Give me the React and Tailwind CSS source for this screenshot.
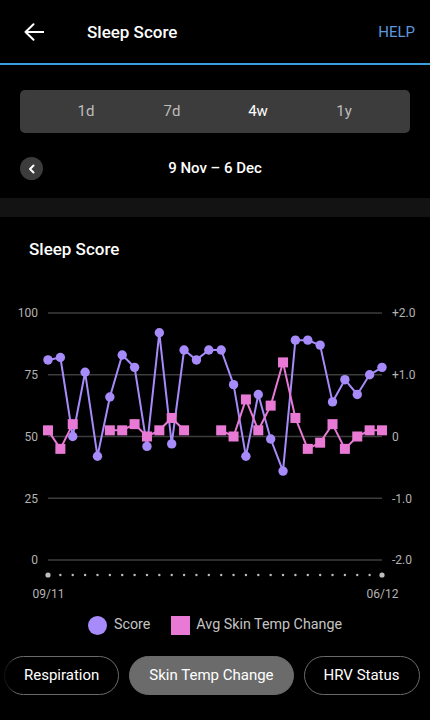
import React from "react";

const scores = [81, 82, 50, 76, 42, 66, 83, 78, 46, 92, 47, 85, 81, 85, 85, 71, 42, 67, 49, 36, 89, 89, 87, 64, 73, 67, 75, 78];
const temps = [52.5, 45, 55, null, null, 52.5, 52.5, 55, 50, 52.5, 57.5, 52.5, null, null, 52.5, 50, 65, 52.5, 62.5, 80, 57.5, 45, 47.5, 55, 45, 50, 52.5, 52.5];

const X0 = 48;
const X1 = 382;
const xAt = (i) => X0 + (i * (X1 - X0)) / 27;
const yAt = (v) => 560 - v * 2.47;

const PURPLE = "#a78bfa";
const PINK = "#e87ad6";

function Chart() {
  const grid = [
    { v: 100, l: "100", r: "+2.0" },
    { v: 75, l: "75", r: "+1.0" },
    { v: 50, l: "50", r: "0" },
    { v: 25, l: "25", r: "-1.0" },
    { v: 0, l: "0", r: "-2.0" },
  ];
  const scorePts = scores.map((v, i) => `${xAt(i).toFixed(1)},${yAt(v).toFixed(1)}`).join(" ");
  const segs = [];
  let cur = [];
  temps.forEach((v, i) => {
    if (v == null) {
      if (cur.length) segs.push(cur);
      cur = [];
    } else cur.push(`${xAt(i).toFixed(1)},${yAt(v).toFixed(1)}`);
  });
  if (cur.length) segs.push(cur);

  return (
    <svg width="430" height="320" viewBox="0 290 430 320" className="block" style={{ fontFamily: "Roboto, 'Liberation Sans', sans-serif" }}>
      {grid.map((g) => (
        <g key={g.v}>
          <line x1={X0} x2={X1} y1={yAt(g.v)} y2={yAt(g.v)} stroke="#3d3d3d" strokeWidth="1.4" />
          <text x="38" y={yAt(g.v)} dy="4.3" textAnchor="end" fontSize="12" fill="#b3b3b3">{g.l}</text>
          <text x="392" y={yAt(g.v)} dy="4.3" textAnchor="start" fontSize="12" fill="#b3b3b3">{g.r}</text>
        </g>
      ))}
      {scores.map((_, i) => (
        <circle key={i} cx={xAt(i)} cy="575" r={i === 0 || i === 27 ? 2.6 : 1.2} fill="#bdbdbd" />
      ))}
      <text x="48.5" y="598" textAnchor="middle" fontSize="12" fill="#b3b3b3">09/11</text>
      <text x="382.5" y="598" textAnchor="middle" fontSize="12" fill="#b3b3b3">06/12</text>

      <polyline points={scorePts} fill="none" stroke={PURPLE} strokeWidth="2" strokeLinejoin="round" />
      {scores.map((v, i) => (
        <circle key={i} cx={xAt(i)} cy={yAt(v)} r="4.7" fill={PURPLE} />
      ))}
      {segs.map((s, k) => (
        <polyline key={k} points={s.join(" ")} fill="none" stroke={PINK} strokeWidth="2" strokeLinejoin="round" />
      ))}
      {temps.map((v, i) =>
        v == null ? null : (
          <rect key={i} x={xAt(i) - 5} y={yAt(v) - 5} width="10" height="10" fill={PINK} />
        )
      )}
    </svg>
  );
}

export default function App() {
  return (
    <div className="w-[430px] h-[720px] bg-black text-white overflow-hidden" style={{ fontFamily: "Roboto, 'Liberation Sans', sans-serif" }}>
      {/* Header */}
      <div className="h-[63px] flex items-center">
        <div className="pl-[24px]">
          <svg width="20" height="18" viewBox="0 0 20 18" className="block">
            <path d="M1.5 9H19.5M9.5 1.2L1.5 9l8 7.8" fill="none" stroke="#ffffff" strokeWidth="2" strokeLinecap="round" strokeLinejoin="round" />
          </svg>
        </div>
        <div className="ml-[43px] text-[17px] font-medium leading-none pt-[1px]">Sleep Score</div>
        <div className="ml-auto pr-[15px] text-[15px] text-[#5f97dd] leading-none pt-[1px]">HELP</div>
      </div>
      <div className="h-[2px] bg-[#3a9ee0]" />

      {/* Segmented control */}
      <div className="mx-[20px] mt-[25px] h-[43px] rounded-[5px] bg-[#3c3c3c] flex justify-center items-center">
        {["1d", "7d", "4w", "1y"].map((t) => (
          <div key={t} className={`w-[86px] text-center text-[15px] ${t === "4w" ? "text-white" : "text-[#bdbdbd]"}`}>{t}</div>
        ))}
      </div>

      {/* Date row */}
      <div className="mt-[24px] px-[20px] grid grid-cols-[23px_1fr_23px] items-center h-[23px]">
        <div className="w-[23px] h-[23px] rounded-full bg-[#3c3c3c] flex items-center justify-center">
          <svg width="8" height="10" viewBox="0 0 8 10" className="block">
            <path d="M5.5 1.5L2 5l3.5 3.5" fill="none" stroke="#ffffff" strokeWidth="2" strokeLinecap="round" strokeLinejoin="round" />
          </svg>
        </div>
        <div className="text-center text-[15px] font-medium">9 Nov – 6 Dec</div>
        <div />
      </div>

      {/* Band */}
      <div className="mt-[18px] h-[19px] bg-[#131313]" />

      {/* Section title */}
      <div className="mt-[20px] pl-[29px] h-[24px] leading-[24px] text-[17px] font-medium">Sleep Score</div>

      <div className="mt-[29px]">
        <Chart />
      </div>

      {/* Legend */}
      <div className="mt-[5px] h-[20px] flex justify-center items-center text-[14.3px] text-[#c4c4c4]">
        <div className="w-[19px] h-[19px] rounded-full bg-[#a78bfa]" />
        <span className="ml-[7px]">Score</span>
        <div className="ml-[21px] w-[19px] h-[19px] bg-[#e87ad6]" />
        <span className="ml-[6px]">Avg Skin Temp Change</span>
      </div>

      {/* Chips */}
      <div className="relative mt-[21px] flex gap-[10px] pl-[4px] overflow-hidden">
        <div className="h-[39px] px-[19px] rounded-full border border-[#6a6a6a] flex items-center text-[15px] whitespace-nowrap">Respiration</div>
        <div className="h-[39px] px-[19px] rounded-full bg-[#6b6b6b] border border-[#6b6b6b] flex items-center text-[15px] whitespace-nowrap">Skin Temp Change</div>
        <div className="h-[39px] px-[19px] rounded-full border border-[#6a6a6a] flex items-center text-[15px] whitespace-nowrap">HRV Status</div>
        <div className="absolute left-0 top-0 bottom-0 w-[16px] bg-gradient-to-r from-black via-black/70 to-transparent" />
      </div>
    </div>
  );
}
